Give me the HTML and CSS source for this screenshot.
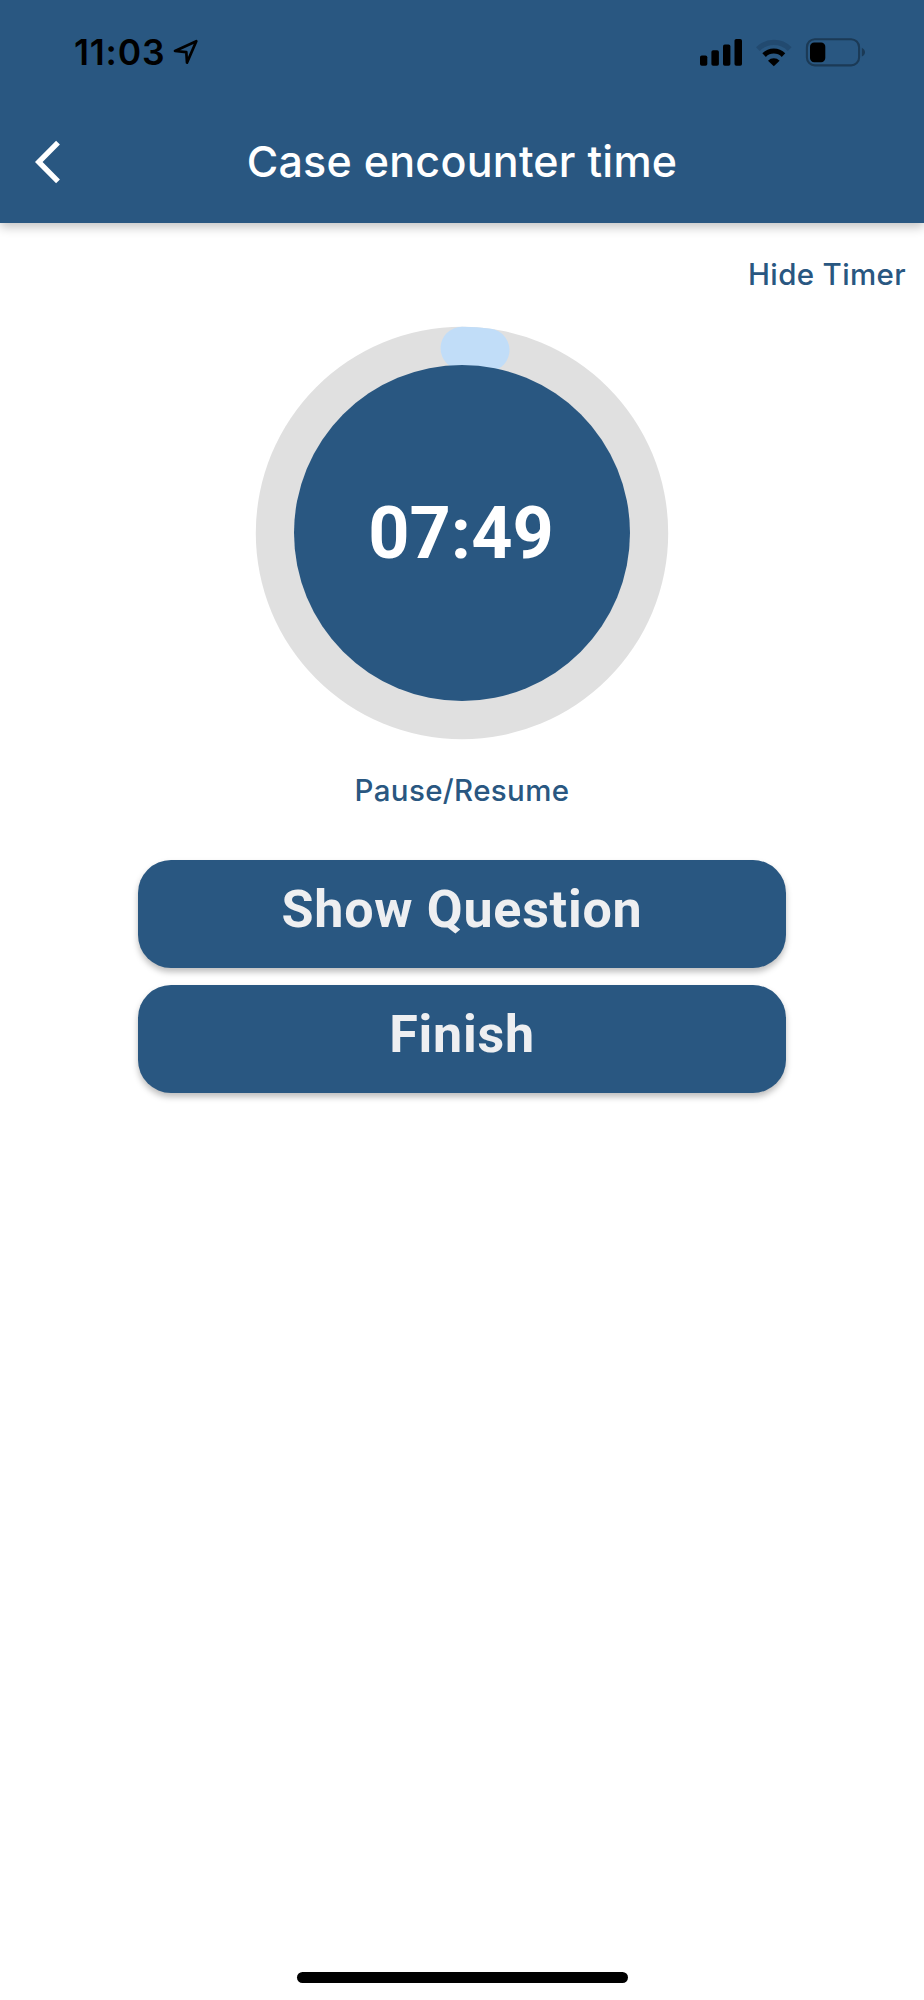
FILE: index.html
```html
<!DOCTYPE html>
<html lang="en">
<head>
<meta charset="utf-8">
<title>Case encounter time</title>
<link rel="stylesheet" href="styles.css">
</head>
<body>
<div class="screen">
  <header class="header">
    <div class="status">
      <span class="clock">11:03</span>
      <svg class="location" width="28" height="28" viewBox="0 0 28 28"><path d="M3 13 L24.3 3.2 L15 24.6 L14.3 14.2 Z" fill="none" stroke="#000" stroke-width="2.7" stroke-linejoin="round"/></svg>
      <svg class="indicators" width="170" height="32" viewBox="0 0 170 32">
        <g fill="#000"><rect x="0" y="18.4" width="7.3" height="10.4" rx="1.8"/><rect x="11.4" y="13.3" width="7.5" height="15.5" rx="1.8"/><rect x="23" y="7.6" width="7.4" height="21.2" rx="1.8"/><rect x="34.5" y="2" width="7.5" height="26.8" rx="1.8"/></g>
        <path d="M57.9 12 A22.5 22.5 0 0 1 89.7 12" fill="none" stroke="#224a70" stroke-width="5.3"/>
        <path d="M64.1 18.1 A13.8 13.8 0 0 1 83.5 18.1" fill="none" stroke="#000" stroke-width="5"/>
        <path d="M68 23.7 A8.3 8.3 0 0 1 79.6 23.7 L73.8 29.3 Z" fill="#000"/>
        <rect x="106.9" y="2.2" width="52.2" height="26.2" rx="8" fill="none" stroke="#1b3a56" stroke-width="2.1"/>
        <rect x="110" y="5.5" width="15.3" height="19.7" rx="4.2" fill="#000"/>
        <path d="M161.8 10.7 Q165 12.3 165 15.2 T161.8 19.6 Z" fill="#1b3a56"/>
      </svg>
    </div>
    <div class="toolbar">
      <svg class="back" width="30" height="48" viewBox="0 0 30 48"><path d="M23 4.6 L3.7 24 L23 43.4" fill="none" stroke="#fff" stroke-width="5.4"/></svg>
      <h1 class="title">Case encounter time</h1>
    </div>
  </header>
  <main class="content">
    <a class="link hide">Hide Timer</a>
    <div class="timer">
      <svg class="dial" width="414" height="414" viewBox="-207 -207 414 414">
        <circle r="206.2" fill="#e0e0e0"/>
        <path d="M0 -184.7 A184.7 184.7 0 0 1 26 -182.9" fill="none" stroke="#c1ddf8" stroke-width="43" stroke-linecap="round"/>
        <circle r="168" fill="#295781"/>
      </svg>
      <span class="time">07:49</span>
    </div>
    <a class="link pause">Pause/Resume</a>
    <div class="actions">
      <button class="button">Show Question</button>
      <button class="button">Finish</button>
    </div>
  </main>
  <div class="home"></div>
</div>
</body>
</html>
```

FILE: styles.css
```css
* { box-sizing: border-box; }
body { margin: 0; background: #fff; font-family: Inter, "Liberation Sans", sans-serif; }
.screen { display: flex; flex-direction: column; width: 924px; height: 2000px; overflow: hidden; }
.header { flex: none; height: 223px; background: #295781; box-shadow: 0 4px 10px rgba(0, 0, 0, .24); }
.status { display: flex; align-items: flex-start; height: 106px; padding: 31px 54px 0 74px; }
.clock { font-size: 35.5px; line-height: 43px; font-weight: 600; letter-spacing: .8px; color: #000; }
.location { margin: 7px 0 0 7px; }
.indicators { margin: 6px 0 0 auto; }
.toolbar { display: grid; grid-template-columns: 92px 1fr 92px; align-items: center; height: 112px; }
.back { margin-left: 35px; }
.title { margin: 0 0 2px; text-align: center; font-size: 43px; line-height: 52px; font-weight: 500; letter-spacing: .25px; color: #fff; white-space: nowrap; }
.content { display: flex; flex: 1; flex-direction: column; align-items: center; }
.link { font-size: 29.5px; line-height: 36px; font-weight: 450; letter-spacing: .35px; color: #295781; }
.hide { align-self: flex-end; margin: 33px 18px 0 0; }
.timer { display: grid; place-items: center; margin-top: 34px; }
.dial, .time { grid-area: 1 / 1; }
.time { padding: 1px 2px 0 0; font: 700 72px/84px Roboto, sans-serif; color: #fff; }
.pause { margin-top: 32px; }
.actions { display: flex; flex-direction: column; gap: 17px; margin-top: 52px; }
.button { width: 648px; height: 108px; padding: 0 0 8px; border: 0; border-radius: 33px; background: #295781; color: #eeeff1; font: 700 52px/60px Roboto, sans-serif; letter-spacing: .75px; box-shadow: 0 4px 6px rgba(0, 0, 0, .26); }
.home { flex: none; align-self: center; width: 331px; height: 11px; margin-bottom: 17px; border-radius: 6px; background: #000; }
```
